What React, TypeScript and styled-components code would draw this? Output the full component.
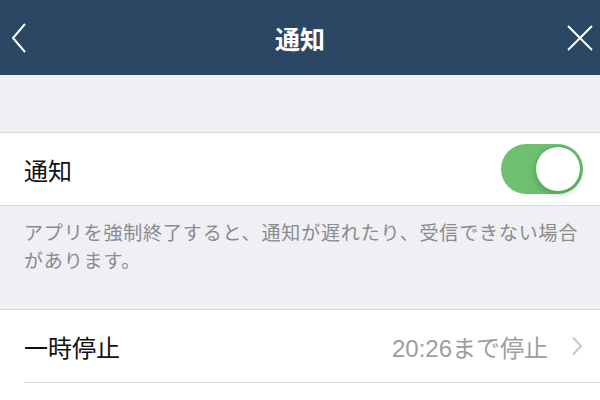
import styled, { createGlobalStyle } from 'styled-components';

const GlobalStyle = createGlobalStyle`
  html, body {
    margin: 0;
    padding: 0;
    background: #ffffff;
  }
  body {
    font-family: "Noto Sans CJK JP", "Noto Sans", sans-serif;
    -webkit-font-smoothing: antialiased;
  }
`;

const Screen = styled.div`
  width: 600px;
  height: 400px;
  overflow: hidden;
  background: #ffffff;
`;

const Header = styled.header`
  height: 75px;
  background: #2c4763;
  display: grid;
  grid-template-columns: 60px 1fr 60px;
  align-items: center;
  color: #ffffff;
`;

const Title = styled.h1`
  margin: 0;
  text-align: center;
  font-size: 25px;
  font-weight: 700;
`;

const IconButton = styled.button<{ $align: 'start' | 'end' }>`
  font: inherit;
  padding: 0;
  margin: 0;
  border: none;
  background: transparent;
  display: flex;
  justify-content: ${p => (p.$align === 'start' ? 'flex-start' : 'flex-end')};
  padding-left: ${p => (p.$align === 'start' ? 10 : 0)}px;
  padding-right: ${p => (p.$align === 'end' ? 7 : 0)}px;
  color: #ffffff;
`;

const Spacer = styled.div<{ $height: number }>`
  height: ${p => p.$height}px;
  background: #efeff4;
  border-bottom: 1px solid #d9d9de;
`;

const Row = styled.div`
  height: 72px;
  background: #ffffff;
  display: flex;
  align-items: center;
  padding: 0 17px 0 24px;
`;

const RowLabel = styled.span`
  flex: 1;
  font-size: 24px;
  color: #111111;
`;

const RowValue = styled.span`
  font-family: "Liberation Sans", "Noto Sans CJK JP", sans-serif;
  font-size: 24px;
  color: #9d9da2;
  margin-right: 23px;
`;

const Note = styled.div`
  background: #efeff4;
  border-top: 1px solid #d9d9de;
  border-bottom: 1px solid #d9d9de;
  padding: 12px 12px 35px 24px;
  font-size: 19px;
  letter-spacing: 0.85px;
  line-height: 28px;
  color: #8a8a8f;
`;

const Divider = styled.div`
  margin-left: 24px;
  border-top: 1px solid #d9d9de;
`;

const Toggle = styled.div<{ $on: boolean }>`
  position: relative;
  width: 82px;
  height: 50px;
  border-radius: 25px;
  background: ${p => (p.$on ? '#6cc070' : '#e5e5ea')};

  &::after {
    content: '';
    position: absolute;
    top: 2px;
    left: ${p => (p.$on ? 34 : 2)}px;
    width: 44px;
    height: 44px;
    border-radius: 50%;
    background: #ffffff;
    border: 1px solid #4caf50;
    box-shadow: 0 3px 6px rgba(0, 0, 0, 0.18);
  }
`;

const BackIcon = () => (
  <svg width="18" height="32" viewBox="0 0 18 32" fill="none">
    <path d="M15 2 L3 16 L15 30" stroke="#fff" strokeWidth="2" />
  </svg>
);

const CloseIcon = () => (
  <svg width="26" height="26" viewBox="0 0 26 26" fill="none">
    <path d="M1 1 L25 25 M25 1 L1 25" stroke="#fff" strokeWidth="2" />
  </svg>
);

const ChevronIcon = () => (
  <svg width="12" height="20" viewBox="0 0 12 20" fill="none">
    <path d="M2 1.5 L10 10 L2 18.5" stroke="#c6c6cb" strokeWidth="2" />
  </svg>
);

export default function App() {
  return (
    <Screen>
      <GlobalStyle />
      <Header>
        <IconButton $align="start">
          <BackIcon />
        </IconButton>
        <Title>通知</Title>
        <IconButton $align="end">
          <CloseIcon />
        </IconButton>
      </Header>
      <Spacer $height={57} />
      <Row>
        <RowLabel>通知</RowLabel>
        <Toggle $on />
      </Row>
      <Note>
        アプリを強制終了すると、通知が遅れたり、受信できない場合があります。
      </Note>
      <Row>
        <RowLabel>一時停止</RowLabel>
        <RowValue>20:26まで停止</RowValue>
        <ChevronIcon />
      </Row>
      <Divider />
    </Screen>
  );
}
